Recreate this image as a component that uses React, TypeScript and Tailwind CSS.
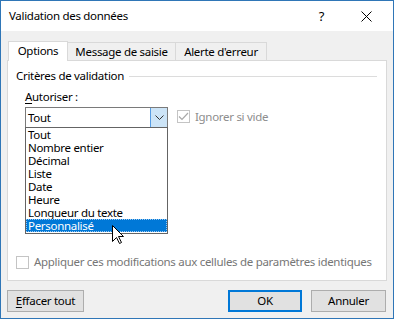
import React from "react";

const items = ["Tout", "Nombre entier", "Décimal", "Liste", "Date", "Heure", "Longueur du texte", "Personnalisé"];

export default function App() {
  return (
    <div
      className="w-[394px] h-[319px] flex flex-col bg-[#f0f0f0] border border-[#2f76b7] text-[11.5px] tracking-[-0.3px] text-black overflow-hidden relative whitespace-nowrap"
      style={{ fontFamily: '"Noto Sans", "Open Sans", sans-serif' }}
    >
      {/* title bar */}
      <div className="h-[30px] bg-white flex items-center pl-[8px] shrink-0">
        <span className="leading-[16px]">Validation des données</span>
        <span className="ml-auto text-[13px] leading-[16px] mr-[37px]">?</span>
        <svg width="11" height="11" viewBox="0 0 11 11" className="mr-[21px]">
          <path d="M0.5 0.5 L10.5 10.5 M10.5 0.5 L0.5 10.5" stroke="#000" strokeWidth="1" />
        </svg>
      </div>

      <div className="flex flex-col px-[6px]">
        {/* tabs */}
        <div className="flex items-end h-[20px] mt-[9px] pl-[1px] relative z-10">
          <div className="w-[60px] h-[20px] bg-white border border-b-0 border-[#d9d9d9] flex items-center justify-center -mb-px pb-[1px]">
            Options
          </div>
          <div className="w-[108px] h-[18px] border border-l-0 border-b-0 border-[#d9d9d9] flex items-center justify-center">
            Message de saisie
          </div>
          <div className="w-[91px] h-[18px] border border-l-0 border-b-0 border-[#d9d9d9] flex items-center justify-center">
            Alerte d'erreur
          </div>
        </div>

        {/* panel */}
        <div className="h-[221px] bg-white border border-[#d9d9d9] flex flex-col">
          <div className="mt-[7px] h-[16px] flex items-center pl-[8px]">
            <span>Critères de validation</span>
            <div className="flex-1 h-px bg-[#dcdcdc] ml-[5px] mr-[9px]" />
          </div>
          <div className="pl-[17px]">
            <div className="mt-[5px] h-[16px] flex items-center">
              <span>
                <span className="underline underline-offset-2">A</span>utoriser :
              </span>
            </div>
            <div className="mt-[2px] flex items-start">
              <div className="relative w-[143px] h-[21px] border border-[#7a7a7a] flex items-center">
                <span className="pl-[2px]">Tout</span>
                <div className="ml-auto w-[17px] h-[19px] bg-[#cce4f7] border-l border-[#569de5] flex items-center justify-center">
                  <svg width="9" height="6" viewBox="0 0 9 6">
                    <path d="M0.5 0.5 L4.5 4.5 L8.5 0.5" fill="none" stroke="#333" strokeWidth="1" />
                  </svg>
                </div>
                <div className="absolute left-[-1px] top-[19px] w-[143px] h-[107px] bg-white border border-[#646464] flex flex-col z-20">
                  {items.map((it, i) =>
                    i === items.length - 1 ? (
                      <div
                        key={it}
                        className="h-[13px] leading-[13px] bg-[#0078d7] text-white pl-[2px] outline outline-1 outline-dotted outline-[#9ac7ef] -outline-offset-1"
                      >
                        {it}
                      </div>
                    ) : (
                      <div key={it} className="h-[13px] leading-[13px] pl-[2px]">
                        {it}
                      </div>
                    )
                  )}
                </div>
              </div>
              <div className="ml-[9px] mt-[1px] flex items-center">
                <div className="w-[13px] h-[13px] border border-[#c4c4c4] flex items-center justify-center">
                  <svg width="11" height="9" viewBox="0 0 11 9">
                    <path d="M1 4.5 L4 7.5 L10 1" fill="none" stroke="#a8a8a8" strokeWidth="1.2" />
                  </svg>
                </div>
                <span className="ml-[5px] text-[#8d8d8d]">Ignorer si vide</span>
              </div>
            </div>
          </div>
          <div className="mt-auto mb-[10px] h-[16px] flex items-center pl-[8px]">
            <div className="w-[13px] h-[13px] border border-[#c4c4c4] shrink-0" />
            <span className="ml-[5px] text-[#767676]">Appliquer ces modifications aux cellules de paramètres identiques</span>
          </div>
        </div>

        {/* buttons */}
        <div className="flex mt-[9px] h-[22px]">
          <div className="w-[77px] h-[22px] bg-[#e1e1e1] border border-[#adadad] flex items-center justify-center">
            <span>
              <span className="underline underline-offset-2">E</span>ffacer tout
            </span>
          </div>
          <div className="ml-auto w-[74px] h-[22px] bg-[#e1e1e1] border-2 border-[#0078d7] flex items-center justify-center">
            OK
          </div>
          <div className="ml-[9px] w-[75px] h-[22px] bg-[#e1e1e1] border border-[#adadad] flex items-center justify-center mr-[1px]">
            Annuler
          </div>
        </div>
      </div>

      {/* cursor */}
      <svg width="13" height="20" viewBox="0 0 13 20" className="absolute left-[111px] top-[224px] z-30">
        <path d="M0.5 0.5 L0.5 16.5 L4.5 12.5 L7.5 18.5 L9.5 17.5 L6.5 11.5 L11.5 11.5 Z" fill="#fff" stroke="#000" strokeWidth="1" />
      </svg>
    </div>
  );
}
